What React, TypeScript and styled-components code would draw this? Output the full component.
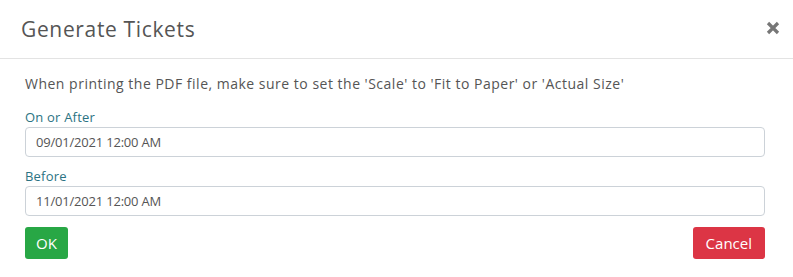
import React from "react";
import styled, { createGlobalStyle } from "styled-components";

const Global = createGlobalStyle`
  html, body { margin: 0; padding: 0; background: #fff; }
  body { font-family: "Open Sans", "Liberation Sans", sans-serif; }
  * { box-sizing: border-box; }
`;

const Modal = styled.div`
  width: 793px;
  height: 277px;
  background: #fff;
  display: flex;
  flex-direction: column;
`;

const Header = styled.div`
  height: 59px;
  display: flex;
  align-items: center;
  justify-content: space-between;
  padding: 0 13px 0 21px;
  border-bottom: 1px solid #e3e3e3;
`;

const Title = styled.h4`
  margin: 0;
  font-size: 21px;
  font-weight: 400;
  color: #555;
  letter-spacing: 0.65px;
`;

const Close = styled.button`
  border: 0;
  background: none;
  padding: 0;
  width: 14px;
  height: 14px;
  display: flex;
  align-items: center;
  justify-content: center;
  cursor: pointer;
  margin-top: -2px;
`;

const Body = styled.div`
  padding: 15px 28px 0 25px;
  display: flex;
  flex-direction: column;
`;

const Note = styled.p`
  margin: 0 0 14px;
  font-size: 14px;
  line-height: 20px;
  color: #555;
  letter-spacing: 0.5px;
`;

const Field = styled.div`
  display: flex;
  flex-direction: column;
  margin-bottom: 10px;
`;

const Label = styled.label`
  font-size: 13px;
  line-height: 18px;
  color: #2b7383;
  margin-bottom: 1px;
  letter-spacing: 0.2px;
`;

const Input = styled.input`
  height: 30px;
  width: 100%;
  border: 1px solid #ccd2d8;
  border-radius: 4px;
  padding: 0 10px;
  font-family: inherit;
  font-size: 13px;
  color: #555;
  letter-spacing: -0.2px;
  outline: none;
`;

const Actions = styled.div`
  display: flex;
  justify-content: space-between;
  margin-top: 1px;
`;

const Button = styled.button<{ $tone: "ok" | "cancel" }>`
  height: 32px;
  padding: 0 ${(p) => (p.$tone === "ok" ? "11px" : "13px")};
  border: 0;
  border-radius: 3px;
  font-family: inherit;
  font-size: 15px;
  color: #fff;
  background: ${(p) => (p.$tone === "ok" ? "#28a745" : "#dc3545")};
  cursor: pointer;
`;

export default function App() {
  return (
    <>
      <Global />
      <Modal>
        <Header>
          <Title>Generate Tickets</Title>
          <Close aria-label="Close">
            <svg width="14" height="14" viewBox="0 0 14 14">
              <path d="M2 2 L12 12 M12 2 L2 12" stroke="#777" strokeWidth="3.2" strokeLinecap="butt" />
            </svg>
          </Close>
        </Header>
        <Body>
          <Note>
            When printing the PDF file, make sure to set the 'Scale' to 'Fit to Paper' or 'Actual Size'
          </Note>
          <Field>
            <Label>On or After</Label>
            <Input defaultValue="09/01/2021 12:00 AM" />
          </Field>
          <Field>
            <Label>Before</Label>
            <Input defaultValue="11/01/2021 12:00 AM" />
          </Field>
          <Actions>
            <Button $tone="ok">OK</Button>
            <Button $tone="cancel">Cancel</Button>
          </Actions>
        </Body>
      </Modal>
    </>
  );
}
